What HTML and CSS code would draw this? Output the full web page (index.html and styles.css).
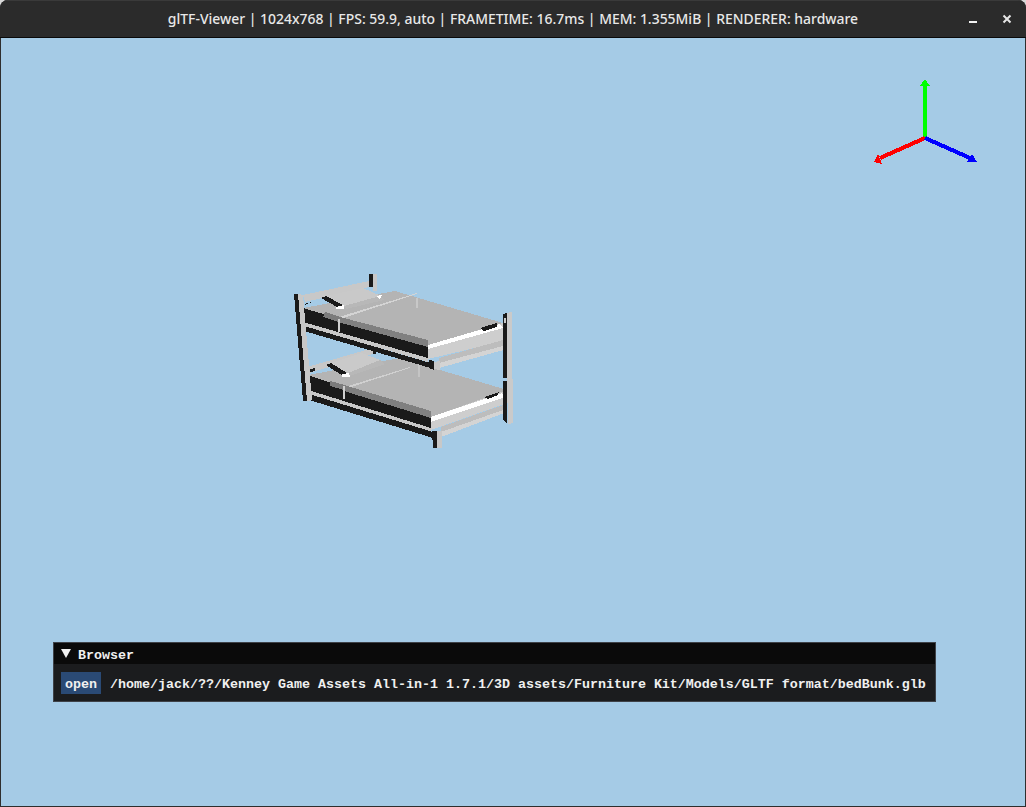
FILE: index.html
```html
<!DOCTYPE html>
<html lang="en">
<head>
<meta charset="utf-8">
<title>glTF-Viewer</title>
<link rel="stylesheet" href="styles.css">
</head>
<body>
<div class="window">
  <header class="titlebar">
    <div class="title">glTF-Viewer | 1024x768 | FPS: 59.9, auto | FRAMETIME: 16.7ms | MEM: 1.355MiB | RENDERER: hardware</div>
    <div class="controls">
      <svg class="ctl" width="16" height="16" viewBox="0 0 16 16"><rect x="4" y="11" width="8" height="2" fill="#f2f2f2"/></svg>
      <svg class="ctl" width="16" height="16" viewBox="0 0 16 16"><path d="M5.5 5.5l7 7M12.5 5.5l-7 7" stroke="#e6e6e6" stroke-width="2" fill="none"/></svg>
    </div>
  </header>
  <main class="viewport">
    <svg class="scene" width="1024" height="768" viewBox="1 38 1024 768">
      <!-- gizmo -->
      <g class="axis">
        <path d="M925 138V85" stroke="#00ff00" stroke-width="4"/>
        <polygon points="925,79 930,86 920,86" fill="#00ff00"/>
        <path d="M925 138L880 158" stroke="#ff0000" stroke-width="4"/>
        <polygon points="874,162 878,154 882,164" fill="#ff0000"/>
        <path d="M925 138L970 158" stroke="#0000ff" stroke-width="4"/>
        <polygon points="977,162 972,154 967,162" fill="#0000ff"/>
      </g>
      <!-- lower bed -->
      <g>
        <polygon points="372,345 376,345 376,354 372,354" fill="#1a1a1a"/>
        <polygon points="307,367 373,348 373,354 309,373" fill="#c8c8c8"/>
        <polygon points="310,369 315,368 315,371 310,372" fill="#1a1a1a"/>
        <polygon points="308,375 400,358 507,390 431,417" fill="#b4b4b4"/>
        <polygon points="328,364 362,353 380,360 348,373" fill="#cacaca"/>
        <polygon points="348,373 380,360 385,364 350,376" fill="#b8b8b8"/>
        <polygon points="326,365 331,363 347,373 343,376" fill="#1a1a1a"/>
        <polygon points="342,374 349,373 350,377 342,377" fill="#ffffff"/>
        <polygon points="345,387 410,367 410,368 345,389" fill="#d0d0d0"/>
        <polygon points="418,363 420,363 420,377 418,377" fill="#c4c4c4"/>
        <polygon points="308,375 431,417 431,430 308,390" fill="#1a1a1a"/>
        <polygon points="330,381 345,385 344,390 330,386" fill="#7c7c7c"/>
        <polygon points="344,385 431,411 431,418 344,391" fill="#808080"/>
        <polygon points="343,386 345,386 345,399 343,399" fill="#cfcfcf"/>
        <polygon points="308,390 431,428 431,432 308,394" fill="#c8c8c8"/>
        <polygon points="306,393 433,432 433,438 306,399" fill="#1a1a1a"/>
        <polygon points="431,417 507,390 507,403 431,430" fill="#cecece"/>
        <polygon points="431,417 502,393 505,397 431,422" fill="#ffffff"/>
        <polygon points="484,397 499,392 498,395 488,399" fill="#1a1a1a"/>
        <polygon points="441,427 503,405 503,410 441,432" fill="#bdbdbd"/>
        <polygon points="441,432 503,410 507,412 441,437" fill="#d4d4d4"/>
        <polygon points="432,431 437,431 437,448 433,448" fill="#1a1a1a"/>
        <polygon points="437,431 442,431 442,448 437,448" fill="#c8c8c8"/>
        <polygon points="503,381 507,381 507,423 503,420" fill="#1a1a1a"/>
        <polygon points="507,380 513,379 513,423 508,424" fill="#cacaca"/>
      </g>
      <!-- upper bed -->
      <g>
        <polygon points="303,295 369,281 369,287 305,302" fill="#c8c8c8"/>
        <polygon points="369,274 373,274 373,287 369,287" fill="#1a1a1a"/>
        <polygon points="373,274 377,274 377,291 373,291" fill="#c8c8c8"/>
        <polygon points="303,308 395,291 503,323 428,345" fill="#b4b4b4"/>
        <polygon points="322,297 363,288 381,296 344,307" fill="#c9c9c9"/>
        <polygon points="344,306 380,296 384,300 346,309" fill="#b8b8b8"/>
        <polygon points="321,298 326,296 343,305 339,308" fill="#1a1a1a"/>
        <polygon points="336,307 344,305 344,309 336,309" fill="#ffffff"/>
        <polygon points="376,296 382,295 380,299" fill="#ffffff"/>
        <polygon points="304,304 312,302 305,305" fill="#1a1a1a"/>
        <polygon points="339,317 417,293 417,294 340,319" fill="#d4d4d4"/>
        <polygon points="416,298 418,298 418,308 416,308" fill="#c8c8c8"/>
        <polygon points="303,308 428,345 428,358 303,322" fill="#1a1a1a"/>
        <polygon points="325,312 340,317 338,322 323,317" fill="#7c7c7c"/>
        <polygon points="340,317 428,340 428,347 338,322" fill="#808080"/>
        <polygon points="338,319 340,319 340,332 338,332" fill="#cfcfcf"/>
        <polygon points="303,322 428,358 428,362 303,326" fill="#c8c8c8"/>
        <polygon points="304,326 434,364 434,369 304,331" fill="#1a1a1a"/>
        <polygon points="428,345 503,323 504,341 428,359" fill="#cecece"/>
        <polygon points="428,345 500,324 503,328 428,349" fill="#ffffff"/>
        <polygon points="480,328 497,323 497,327 484,331" fill="#1a1a1a"/>
        <polygon points="439,358 503,340 503,346 439,363" fill="#bdbdbd"/>
        <polygon points="439,363 503,346 507,349 439,368" fill="#d4d4d4"/>
        <polygon points="429,360 434,361 434,370 429,368" fill="#1a1a1a"/>
        <polygon points="434,362 440,361 440,370 434,369" fill="#c8c8c8"/>
        <polygon points="503,314 507,313 507,378 503,378" fill="#1a1a1a"/>
        <polygon points="507,313 512,312 512,380 507,381" fill="#cacaca"/>
        <polygon points="504,318 506,318 506,323 504,323" fill="#cacaca"/>
        <polygon points="294,294 298,294 307,401 303,401" fill="#1a1a1a"/>
        <polygon points="298,294 303,295 312,400 307,401" fill="#c8c8c8"/>
      </g>
    </svg>
    <section class="panel">
      <div class="panel-title"><span class="tri"></span><span class="label">Browser</span></div>
      <div class="panel-body">
        <span class="open"><span class="label">open</span></span>
        <span class="path label">/home/jack/??/Kenney Game Assets All-in-1 1.7.1/3D assets/Furniture Kit/Models/GLTF format/bedBunk.glb</span>
      </div>
    </section>
  </main>
</div>
</body>
</html>
```
FILE: styles.css
```css
* { box-sizing: border-box; }
html, body { margin: 0; padding: 0; }
body {
  width: 1026px;
  height: 807px;
  overflow: hidden;
  background: #d8d8d8;
}
.window {
  width: 1026px;
  height: 807px;
  display: flex;
  flex-direction: column;
  border-radius: 8px 8px 0 0;
  overflow: hidden;
  background: #2e2e2e;
}
.titlebar {
  height: 38px;
  flex: none;
  display: flex;
  align-items: center;
  justify-content: center;
  position: relative;
  background: #2b2b2b;
  border-top: 1px solid #3a3a3a;
  border-bottom: 1px solid #0a0a0a;
}
.title {
  font-family: "Noto Sans", sans-serif;
  font-size: 13.94px;
  font-weight: 500;
  color: #e8e8e8;
  white-space: nowrap;
  padding-bottom: 1px;
}
.controls {
  position: absolute;
  top: 9px;
  right: 12px;
  display: flex;
  gap: 17px;
}
.ctl { display: block; }
.viewport {
  flex: 1;
  margin: 0 1px 1px;
  position: relative;
  background: #a5cbe6;
  overflow: hidden;
}
.scene {
  position: absolute;
  left: 0;
  top: 0;
  display: block;
  shape-rendering: crispEdges;
}
.axis path { fill: none; }
.panel {
  position: absolute;
  left: 52px;
  top: 604px;
  width: 883px;
  height: 60px;
  border: 1px solid #3f4248;
  background: #1b1c1e;
  font-family: "Liberation Mono", monospace;
  font-size: 13.33px;
  font-weight: 700;
  color: #f0f0f0;
  display: flex;
  flex-direction: column;
}
.panel-title {
  height: 21px;
  flex: none;
  display: flex;
  align-items: center;
  gap: 7px;
  padding-left: 7px;
  background: #0a0a0a;
}
.label { padding-top: 3px; }
.tri {
  width: 0;
  height: 0;
  border-left: 5.5px solid transparent;
  border-right: 5.5px solid transparent;
  border-top: 9px solid #f0f0f0;
}
.panel-body {
  flex: 1;
  display: flex;
  align-items: center;
  gap: 9px;
  padding-left: 7px;
  white-space: nowrap;
}
.open {
  width: 40px;
  height: 22px;
  background: #2a4a75;
  display: flex;
  align-items: center;
  justify-content: center;
}
```
